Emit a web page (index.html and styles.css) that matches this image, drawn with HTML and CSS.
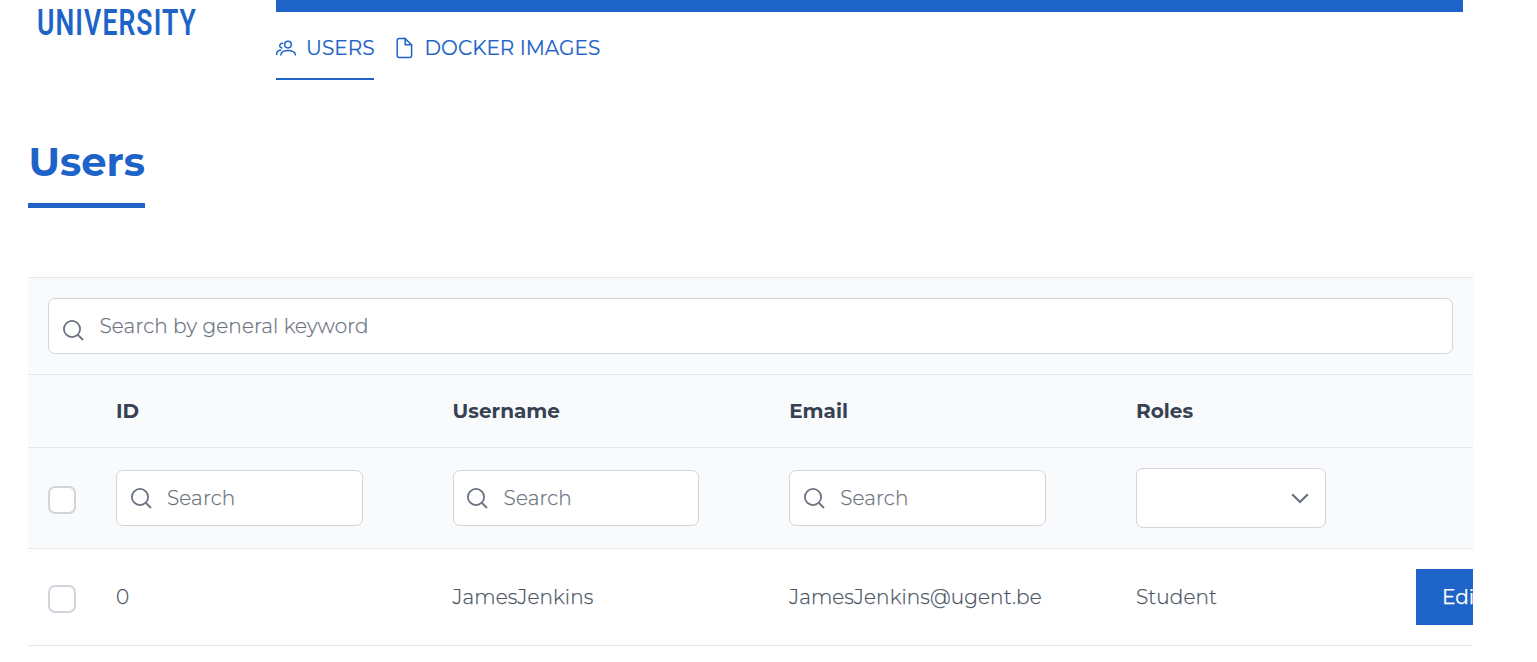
FILE: index.html
```
<!DOCTYPE html>
<html lang="en">
<head>
<meta charset="utf-8">
<title>Users</title>
<link rel="stylesheet" href="styles.css">
</head>
<body>
<svg class="sprite" width="0" height="0" aria-hidden="true">
  <symbol id="search" viewBox="0 0 21 21"><circle cx="9" cy="9" r="8.1"/><path d="M15 15l5 5"/></symbol>
</svg>
<header class="header">
  <div class="logo">
    <svg width="200" height="44"><text x="9" y="35" textLength="160" lengthAdjust="spacingAndGlyphs">UNIVERSITY</text></svg>
  </div>
  <div class="top">
    <div class="bar"></div>
    <nav class="nav">
      <a class="link active">
        <svg width="21" height="17" viewBox="0 0 21 17"><circle cx="12" cy="4.6" r="3.3"/><path d="M4.8 15.6V14.6C6.2 9.2 18 9.2 19.4 14.6V15.6"/><path d="M7.2 3.5C3.4 2.3 2.2 8 6.4 7.9"/><path d="M.7 15V13.6C1 11.6 2.6 10.2 5.3 10.1"/></svg>
        <span>USERS</span>
      </a>
      <a class="link">
        <svg class="file" width="17" height="22" viewBox="0 0 17 22"><path d="M9.2 1.6H3.2Q1.2 1.6 1.2 3.6V18.4Q1.2 20.4 3.2 20.4H13.6Q15.6 20.4 15.6 18.4V7.8L9.2 1.6V7.8H15.6"/></svg>
        <span>DOCKER IMAGES</span>
      </a>
    </nav>
  </div>
</header>
<main class="main">
  <h1 class="title"><span>Users</span></h1>
  <section class="table">
    <div class="row keyword">
      <label class="field wide"><svg width="21" height="21"><use href="#search"/></svg><input type="text" placeholder="Search by general keyword"></label>
    </div>
    <div class="row grid head">
      <div></div><div>ID</div><div>Username</div><div>Email</div><div>Roles</div><div></div>
    </div>
    <div class="row grid filters">
      <div><span class="check"></span></div>
      <div><label class="field"><svg width="21" height="21"><use href="#search"/></svg><input type="text" placeholder="Search"></label></div>
      <div><label class="field user"><svg width="21" height="21"><use href="#search"/></svg><input type="text" placeholder="Search"></label></div>
      <div><label class="field mail"><svg width="21" height="21"><use href="#search"/></svg><input type="text" placeholder="Search"></label></div>
      <div><div class="select"><svg width="18" height="11" viewBox="0 0 18 11"><path d="M1.2 1.2L9 9L16.8 1.2"/></svg></div></div>
      <div></div>
    </div>
    <div class="row grid data">
      <div><span class="check"></span></div>
      <div>0</div><div>JamesJenkins</div><div>JamesJenkins@ugent.be</div><div>Student</div>
      <div><button class="edit">Edit</button></div>
    </div>
  </section>
</main>
</body>
</html>
```
FILE: styles.css
```
* { box-sizing: border-box; }
body { margin: 0; height: 662px; overflow: hidden; background: #fff; font-family: Montserrat, Inter, sans-serif; font-size: 20px; color: #4b5563; }
svg { display: block; flex: none; fill: none; stroke: currentColor; }
.sprite { position: absolute; }
.header { display: flex; padding: 0 74px 0 28px; height: 80px; color: #1e64c8; }
.logo { width: 248px; }
.logo text { font: 600 36px Roboto, sans-serif; letter-spacing: 1.5px; fill: #1e64c8; stroke: none; }
.top { flex: 1; }
.bar { height: 12px; background: #1e64c8; }
.nav { display: flex; gap: 22px; height: 68px; }
.link { display: flex; align-items: flex-start; gap: 9px; height: 68px; padding: 24px 0 0; border-bottom: 2px solid transparent; stroke-width: 1.5; white-space: nowrap; letter-spacing: .05px; }
.link span { line-height: 24px; -webkit-text-stroke: .2px; }
.link svg { margin-top: 4px; }
.link .file { margin: 1px 2.5px 0 0; }
.active { border-color: #1e64c8; width: 98px; }
.main { padding: 58px 64px 0 28px; }
.title { margin: 0; height: 139px; color: #1e64c8; font-size: 40px; font-weight: 700; line-height: 48px; }
.title span { display: block; width: 117px; height: 70px; border-bottom: 5px solid #1e64c8; text-indent: .5px; }
.table { border-top: 1px solid #e5e7eb; overflow: hidden; }
.row { background: #f8fafc; border-bottom: 1px solid #e5e7eb; }
.keyword { height: 97px; padding: 20px; }
.grid { display: grid; grid-template-columns: 68px 336.6px 336.6px 346.8px 280px 140px; }
.grid > div { padding: 0 20px; }
.head { height: 73px; line-height: 72px; color: #374151; font-weight: 700; }
.filters { height: 101px; align-items: center; }
.field { display: flex; align-items: center; gap: 15px; width: 247px; height: 56px; padding: 0 14px; background: #fff; border: 1px solid #d1d5db; border-radius: 7px; color: #6b7280; stroke-width: 1.8; }
.wide { width: 100%; }
.wide svg { margin-top: 8px; }
.wide input { text-indent: .5px; }
.user { width: 246px; padding-left: 13px; gap: 16px; }
.mail { width: 257px; }
.field input { flex: 1; min-width: 0; height: 30px; padding: 0 0 1px; border: 0; outline: 0; background: none; font: inherit; font-weight: 350; color: inherit; letter-spacing: .14px; }
.field input::placeholder { color: #6b7280; opacity: 1; -webkit-text-stroke: .25px; }
.select { display: flex; align-items: center; justify-content: flex-end; width: 190px; height: 60px; padding-right: 16px; background: #fff; border: 1px solid #d1d5db; border-radius: 7px; color: #6b7280; stroke-width: 2.2; }
.check { display: block; width: 28px; height: 28px; margin-top: 4px; background: #fff; border: 2px solid #d1d5db; border-radius: 7px; }
.data { height: 97px; align-items: center; background: #fff; font-weight: 350; letter-spacing: .12px; -webkit-text-stroke: .25px; }
.edit { width: 110px; height: 56px; padding: 0 0 0 26px; border: 0; background: #1e64c8; color: #fff; font: inherit; font-weight: 400; text-align: left; display: block; }
```
